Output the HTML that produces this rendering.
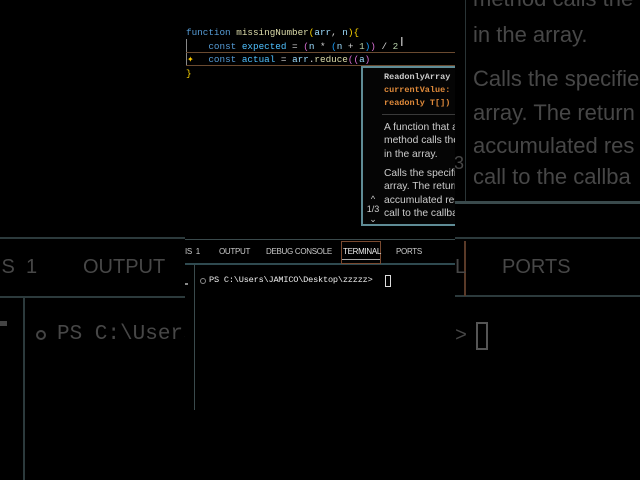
<!DOCTYPE html>
<html><head><meta charset="utf-8"><style>
*{margin:0;padding:0;box-sizing:border-box}
body{width:640px;height:480px;background:#000;position:relative;overflow:hidden;font-family:"Liberation Sans",sans-serif}
.a{position:absolute;white-space:nowrap}
.m{font-family:"Liberation Mono","DejaVu Sans Mono",monospace}
.bg{color:#474747;font-size:22px}
</style></head><body>
<!-- right background -->
<div class="a" style="left:465px;top:0;width:1px;height:202px;background:#2a3436"></div>
<div class="a" style="left:455px;top:201px;width:185px;height:3px;background:#3a4a4c"></div>
<div class="a bg" style="left:473px;top:-14px">method calls the</div>
<div class="a bg" style="left:473px;top:22px">in the array.</div>
<div class="a bg" style="left:473px;top:66px">Calls the specifie</div>
<div class="a bg" style="left:473px;top:100px">array. The return</div>
<div class="a bg" style="left:473px;top:133px">accumulated res</div>
<div class="a bg" style="left:473px;top:164px">call to the callba</div>
<div class="a bg" style="left:454px;top:153px;font-size:18px">3</div>
<div class="a" style="left:455px;top:237px;width:185px;height:2px;background:#2c3a3c"></div>
<div class="a" style="left:455px;top:295px;width:185px;height:2px;background:#2c3a3c"></div>
<div class="a" style="left:464px;top:241px;width:2px;height:55px;background:#5a3a28"></div>
<div class="a bg" style="left:455px;top:256px;font-size:20px">L</div>
<div class="a bg" style="left:502px;top:256px;font-size:20px">PORTS</div>
<div class="a bg m" style="left:455px;top:325px;font-size:20px">&gt;</div>
<div class="a" style="left:476px;top:322px;width:12px;height:28px;border:2px solid #555"></div>
<!-- left background -->
<div class="a" style="left:0;top:237px;width:186px;height:2px;background:#2c3a3c"></div>
<div class="a" style="left:0;top:296px;width:186px;height:2px;background:#2c3a3c"></div>
<div class="a" style="left:23px;top:298px;width:2px;height:182px;background:#2c3a3c"></div>
<div class="a" style="left:0;top:321px;width:7px;height:5px;background:#444"></div>
<div class="a bg" style="left:-4px;top:256px;font-size:20px">IS&nbsp; 1</div>
<div class="a bg" style="left:83px;top:256px;font-size:20px">OUTPUT</div>
<div class="a" style="left:36px;top:330px;width:10px;height:10px;border:2px solid #444;border-radius:50%"></div>
<div class="a bg m" style="left:57px;top:323px;font-size:21px;width:129px;overflow:hidden">PS C:\Users</div>
<!-- center -->
<div class="a" style="left:185px;top:0;width:270px;height:480px;background:#000;overflow:hidden">
<div class="a m" style="left:1px;top:26px;font-size:9.3px;line-height:13.5px;color:#d4d4d4">
<div><span style="color:#569cd6">function</span> <span style="color:#dcdcaa">missingNumber</span><span style="color:#ffd700">(</span><span style="color:#9cdcfe">arr</span>, <span style="color:#9cdcfe">n</span><span style="color:#ffd700">){</span></div>
<div>&nbsp;&nbsp;&nbsp;&nbsp;<span style="color:#569cd6">const</span> <span style="color:#4fc1ff">expected</span> = <span style="color:#da70d6">(</span><span style="color:#9cdcfe">n</span> * <span style="color:#179fff">(</span><span style="color:#9cdcfe">n</span> + <span style="color:#b5cea8">1</span><span style="color:#179fff">)</span><span style="color:#da70d6">)</span> / <span style="color:#b5cea8">2</span></div>
<div>&nbsp;&nbsp;&nbsp;&nbsp;<span style="color:#569cd6">const</span> <span style="color:#4fc1ff">actual</span> = <span style="color:#9cdcfe">arr</span>.<span style="color:#dcdcaa">reduce</span><span style="color:#da70d6">((</span><span style="color:#9cdcfe">a</span><span style="color:#da70d6">)</span></div>
<div style="color:#ffd700">}</div>
</div>
<div class="a" style="left:1px;top:39px;width:1px;height:26px;background:#888"></div>
<div class="a" style="left:1px;top:52px;width:269px;height:1px;background:#6a4a30"></div>
<div class="a" style="left:1px;top:65px;width:269px;height:1px;background:#6a4a30"></div>
<div class="a" style="left:2px;top:55px;color:#ffcc00;font-size:8px">✦</div>
<div class="a" style="left:215px;top:34px;color:#ccc;font-size:13px">I</div>
<!-- hover -->
<div class="a" style="left:176px;top:66px;width:100px;height:160px;border:2px solid #5f8c96;background:#050505;overflow:hidden;font-size:10.3px;color:#ccc;line-height:13.4px">
<div class="a m" style="left:21px;top:3px;font-size:8.5px;font-weight:bold;line-height:13px">ReadonlyArray<br><span style="color:#e08a3a">currentValue:</span><br><span style="color:#e08a3a">readonly T[])</span></div>
<div class="a" style="left:19px;top:46px;width:80px;height:1px;background:#3a3a3a"></div>
<div class="a" style="left:21px;top:53px">A function that a<br>method calls the<br>in the array.</div>
<div class="a" style="left:21px;top:99px">Calls the specifie<br>array. The return<br>accumulated res<br>call to the callba</div>
<div class="a" style="left:0;top:126px;width:20px;text-align:center;font-size:9px;line-height:10px">^<br>1/3<br>⌄</div>
</div>
</div>
<!-- panel -->
<div class="a" style="left:185px;top:239px;width:270px;height:1px;background:#3a4a4c"></div>
<div class="a" style="left:185px;top:263px;width:270px;height:2px;background:#2f4a50"></div>
<div class="a" style="left:341px;top:241px;width:40px;height:23px;border:1px solid #7a4a30"></div>
<div class="a" style="left:342px;top:259px;width:38px;height:1px;background:#aaa"></div>
<div class="a" style="left:185px;top:247px;font-size:8px;color:#ccc;letter-spacing:-.3px">IS&nbsp; 1</div>
<div class="a" style="left:219px;top:247px;font-size:8px;color:#ccc;letter-spacing:-.3px">OUTPUT</div>
<div class="a" style="left:266px;top:247px;font-size:8px;color:#ccc;letter-spacing:-.3px">DEBUG CONSOLE</div>
<div class="a" style="left:343px;top:247px;font-size:8px;color:#eee;letter-spacing:-.3px">TERMINAL</div>
<div class="a" style="left:396px;top:247px;font-size:8px;color:#ccc;letter-spacing:-.3px">PORTS</div>
<div class="a" style="left:194px;top:265px;width:1px;height:145px;background:#3a4a4c"></div>
<div class="a" style="left:185px;top:283px;width:3px;height:2px;background:#888"></div>
<div class="a" style="left:200px;top:278px;width:6px;height:6px;border:1px solid #888;border-radius:50%"></div>
<div class="a m" style="left:209px;top:275px;font-size:8.6px;color:#eee;letter-spacing:-.2px">PS C:\Users\JAMICO\Desktop\zzzzz&gt;</div>
<div class="a" style="left:385px;top:275px;width:6px;height:12px;border:1px solid #ddd"></div>
</body></html>
